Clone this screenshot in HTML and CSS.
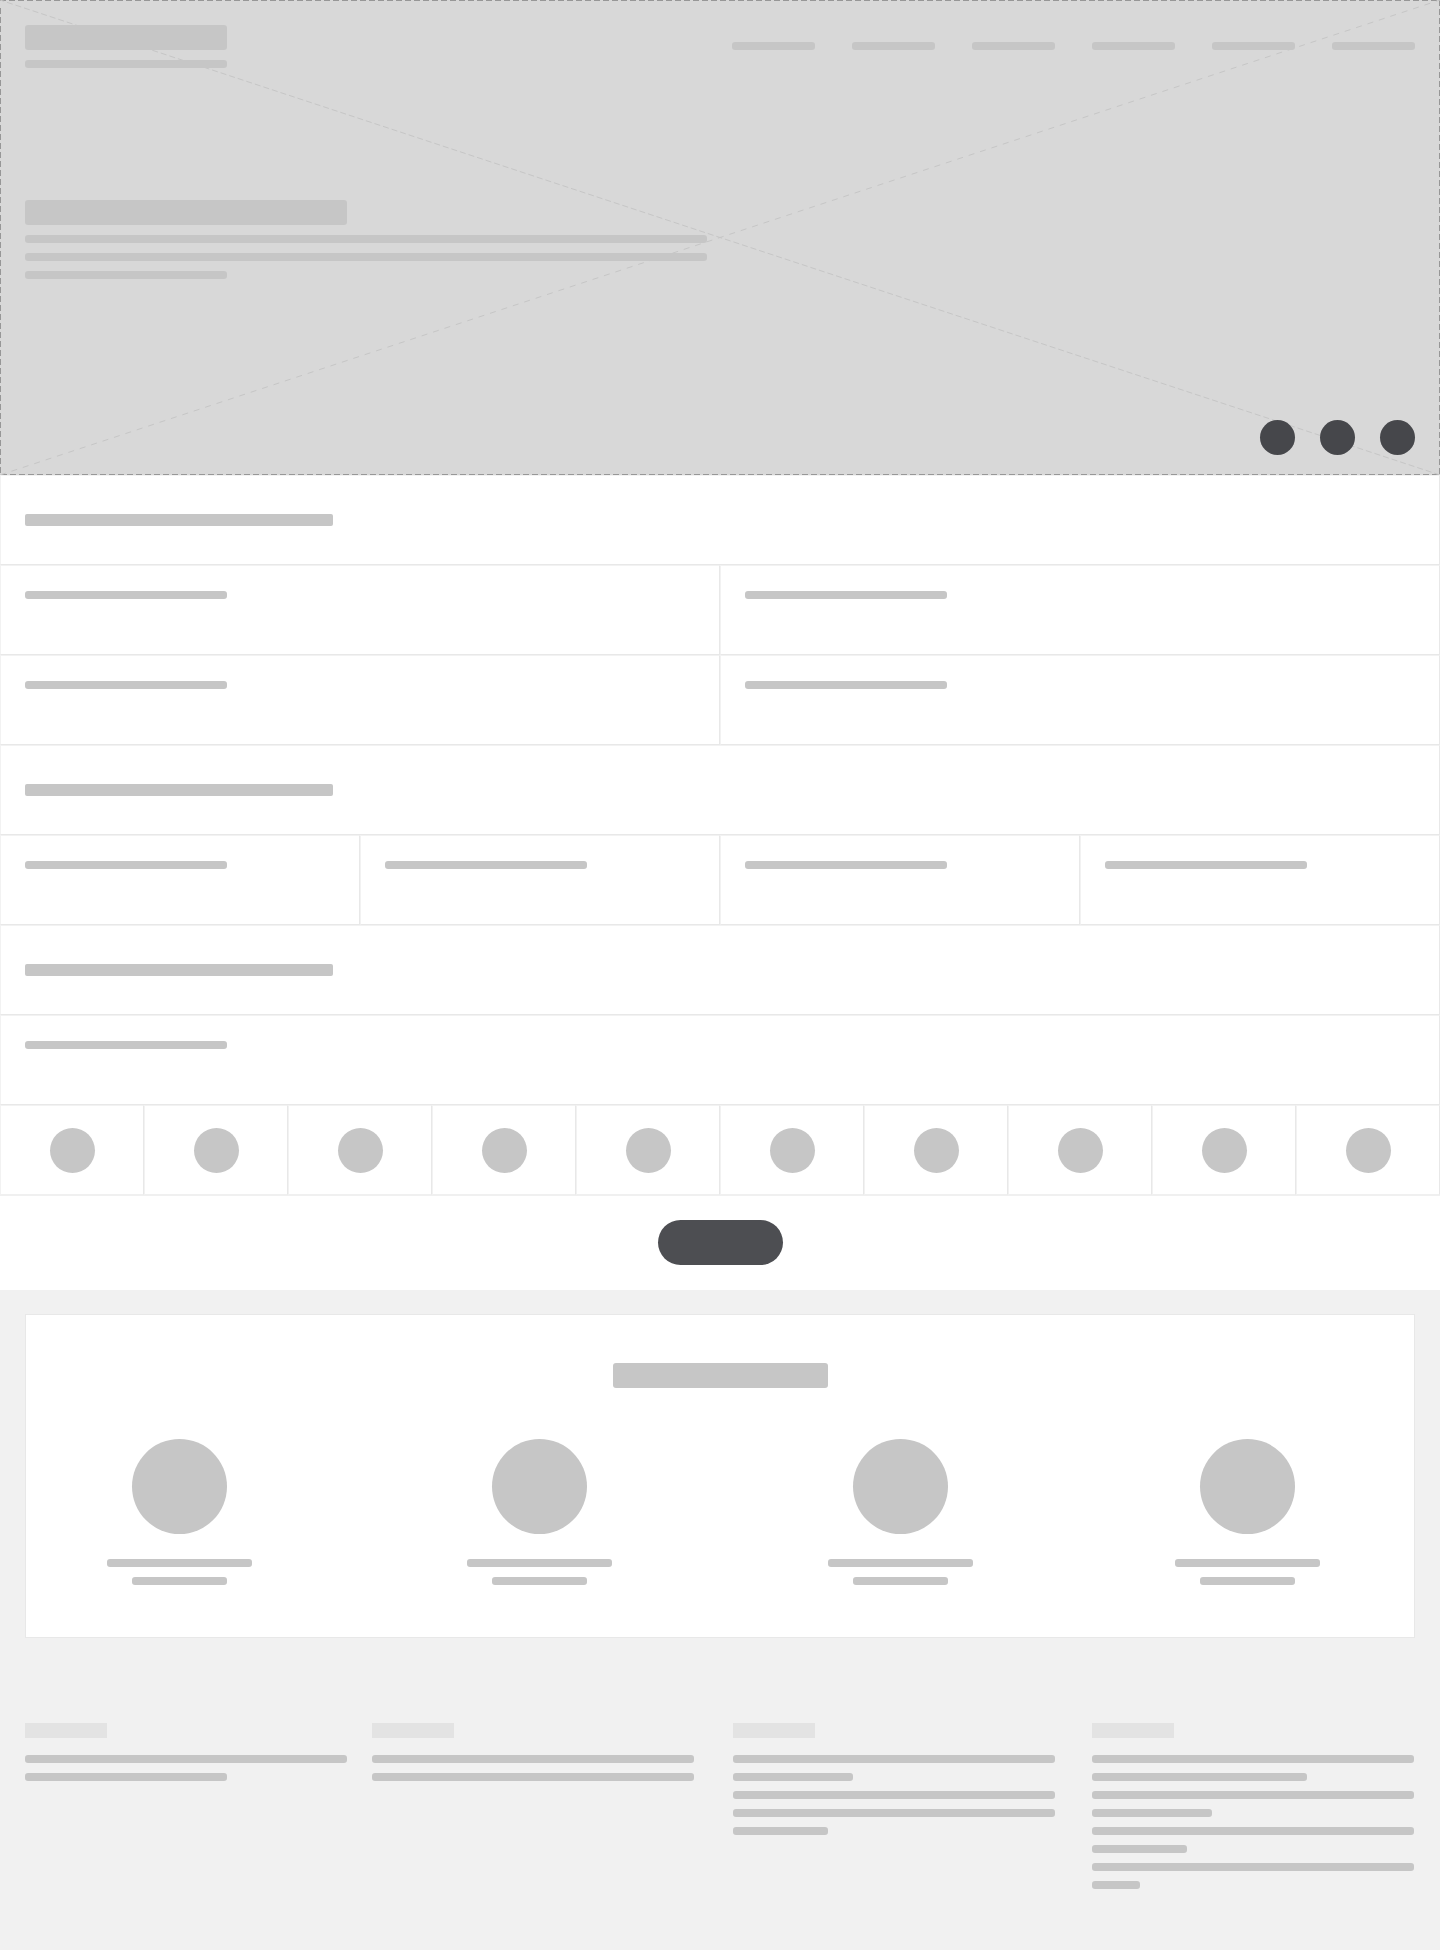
FILE: index.html
```html
<!DOCTYPE html>
<html lang="en">
<head>
<meta charset="utf-8">
<meta name="viewport" content="width=device-width, initial-scale=1">
<title>Wireframe</title>
<link rel="stylesheet" href="styles.css">
</head>
<body>
<header class="hero">
  <svg class="hero-frame" aria-hidden="true">
    <g class="edges">
      <line x1="0" y1="0.5" x2="100%" y2="0.5"/>
      <line x1="100%" y1="0" x2="100%" y2="100%" class="edge-thick"/>
      <line x1="1" y1="474.5" x2="100%" y2="474.5"/>
      <line x1="0.5" y1="8" x2="0.5" y2="100%"/>
    </g>
    <line class="diagonal" x1="100%" y1="100%" x2="0" y2="0"/>
    <line class="diagonal loose" x1="0" y1="100%" x2="100%" y2="0"/>
  </svg>
  <div class="topbar">
    <div class="stack">
      <span class="bar bar-lg w-202"></span>
      <span class="bar w-202"></span>
    </div>
    <nav class="nav" aria-label="Main">
      <a class="bar" href="#" aria-label="Link 1"></a>
      <a class="bar" href="#" aria-label="Link 2"></a>
      <a class="bar" href="#" aria-label="Link 3"></a>
      <a class="bar" href="#" aria-label="Link 4"></a>
      <a class="bar" href="#" aria-label="Link 5"></a>
      <a class="bar" href="#" aria-label="Link 6"></a>
    </nav>
  </div>
  <div class="stack intro">
    <span class="bar bar-lg w-322"></span>
    <span class="bar w-682"></span>
    <span class="bar w-682"></span>
    <span class="bar w-202"></span>
  </div>
  <div class="social">
    <a href="#" aria-label="Social 1"></a>
    <a href="#" aria-label="Social 2"></a>
    <a href="#" aria-label="Social 3"></a>
  </div>
</header>

<main>
  <section class="cells">
    <div class="cell cell-title"><span class="bar bar-md"></span></div>
    <div class="row cols-2">
      <div class="cell"><span class="bar w-202"></span></div>
      <div class="cell"><span class="bar w-202"></span></div>
      <div class="cell"><span class="bar w-202"></span></div>
      <div class="cell"><span class="bar w-202"></span></div>
    </div>
    <div class="cell cell-title"><span class="bar bar-md"></span></div>
    <div class="row cols-4">
      <div class="cell"><span class="bar w-202"></span></div>
      <div class="cell"><span class="bar w-202"></span></div>
      <div class="cell"><span class="bar w-202"></span></div>
      <div class="cell"><span class="bar w-202"></span></div>
    </div>
    <div class="cell cell-title"><span class="bar bar-md"></span></div>
    <div class="cell"><span class="bar w-202"></span></div>
    <div class="row cols-10">
      <div class="cell cell-dot"><span class="dot"></span></div>
      <div class="cell cell-dot"><span class="dot"></span></div>
      <div class="cell cell-dot"><span class="dot"></span></div>
      <div class="cell cell-dot"><span class="dot"></span></div>
      <div class="cell cell-dot"><span class="dot"></span></div>
      <div class="cell cell-dot"><span class="dot"></span></div>
      <div class="cell cell-dot"><span class="dot"></span></div>
      <div class="cell cell-dot"><span class="dot"></span></div>
      <div class="cell cell-dot"><span class="dot"></span></div>
      <div class="cell cell-dot"><span class="dot"></span></div>
    </div>
  </section>
  <div class="action"><button class="pill" type="button" aria-label="Continue"></button></div>

  <section class="card">
    <span class="bar bar-lg card-title"></span>
    <div class="people">
      <div class="person"><span class="avatar"></span><span class="bar w-145"></span><span class="bar w-95"></span></div>
      <div class="person"><span class="avatar"></span><span class="bar w-145"></span><span class="bar w-95"></span></div>
      <div class="person"><span class="avatar"></span><span class="bar w-145"></span><span class="bar w-95"></span></div>
      <div class="person"><span class="avatar"></span><span class="bar w-145"></span><span class="bar w-95"></span></div>
    </div>
  </section>
</main>

<footer class="footer">
  <div class="stack">
    <span class="label"></span>
    <span class="bar w-322"></span>
    <span class="bar w-202"></span>
  </div>
  <div class="stack">
    <span class="label"></span>
    <span class="bar w-322"></span>
    <span class="bar w-322"></span>
  </div>
  <div class="stack">
    <span class="label"></span>
    <span class="bar w-322"></span>
    <span class="bar w-120"></span>
    <span class="bar w-322"></span>
    <span class="bar w-322"></span>
    <span class="bar w-95"></span>
  </div>
  <div class="stack">
    <span class="label"></span>
    <span class="bar w-322"></span>
    <span class="bar w-215"></span>
    <span class="bar w-322"></span>
    <span class="bar w-120"></span>
    <span class="bar w-322"></span>
    <span class="bar w-95"></span>
    <span class="bar w-322"></span>
    <span class="bar w-48"></span>
  </div>
</footer>
</body>
</html>
```

FILE: styles.css
```css
*,
*::before,
*::after {
  box-sizing: border-box;
}

body {
  margin: 0;
  background: #f1f1f1;
  font-family: "Liberation Sans", Arial, sans-serif;
}

/* Placeholder bars */
.bar {
  display: block;
  height: 8px;
  max-width: 100%;
  border-radius: 3px;
  background: #c6c6c6;
}

.bar-md { width: 308px; height: 12px; border-radius: 2px; }
.bar-lg { height: 25px; }

.w-48 { width: 48px; }
.w-95 { width: 95px; }
.w-120 { width: 120px; }
.w-145 { width: 145px; }
.w-202 { width: 202px; }
.w-215 { width: 215px; }
.w-322 { width: 322px; }
.w-682 { width: 682px; }

.stack {
  display: flex;
  flex-direction: column;
  gap: 10px;
}

/* Hero */
.hero {
  position: relative;
  display: flex;
  flex-direction: column;
  height: 475px;
  padding: 25px 25px 20px;
  background: #d8d8d8;
}

.hero-frame {
  position: absolute;
  inset: 0;
  width: 100%;
  height: 100%;
  pointer-events: none;
}

.edges line {
  stroke: #979797;
  stroke-width: 1;
  stroke-dasharray: 6 3;
}

/* Half of this stroke falls outside the frame */
.edges .edge-thick { stroke-width: 2; }

.diagonal {
  stroke: #c6c6c6;
  stroke-width: 1;
  stroke-dasharray: 6 3;
}

.loose { stroke-dasharray: 6 6; }

.topbar {
  position: relative;
  display: flex;
  justify-content: space-between;
}

.nav {
  display: flex;
  gap: 37px;
  padding-top: 17px;
}

.nav .bar { width: 83px; }

.intro {
  position: relative;
  margin-top: 132px;
}

.social {
  position: relative;
  display: flex;
  justify-content: flex-end;
  gap: 25px;
  margin-top: auto;
}

.social a {
  width: 35px;
  height: 35px;
  border-radius: 50%;
  background: #46474b;
}

/* Bordered rows */
.cells { background: #fff; }

.row { display: grid; }
.cols-2 { grid-template-columns: repeat(2, 1fr); }
.cols-4 { grid-template-columns: repeat(4, 1fr); }
.cols-10 { grid-template-columns: repeat(10, 1fr); }

.cell {
  height: 90px;
  padding: 25px 24px;
  border: 1px solid #f2f2f2;
  border-right-color: #e8e8e8;
  border-bottom-color: #e8e8e8;
}

.cell-title { padding-top: 38px; }

.cell-dot {
  display: flex;
  justify-content: center;
  padding: 22px 0 0;
  border-bottom-color: #f0f0f0;
}

.dot {
  width: 45px;
  height: 45px;
  border-radius: 50%;
  background: #c6c6c6;
}

.action {
  display: flex;
  justify-content: center;
  padding: 24px 0 25px;
  border-top: 1px solid #f0f0f0;
  background: #fff;
}

.pill {
  width: 125px;
  height: 45px;
  padding: 0;
  border: 0;
  border-radius: 23px;
  background: #4d4e52;
}

/* Card */
.card {
  margin: 24px 25px 0;
  padding: 48px 0 52px;
  border: 1px solid #e8e8e8;
  background: #fff;
}

.card-title {
  width: 215px;
  margin: 0 auto 51px;
}

.people {
  display: grid;
  grid-template-columns: 360fr 361fr 347fr 239fr;
  padding-left: 81px;
}

.person {
  display: flex;
  flex-direction: column;
  align-items: center;
  gap: 10px;
  width: 145px;
}

.avatar {
  width: 95px;
  height: 95px;
  margin-bottom: 15px;
  border-radius: 50%;
  background: #c6c6c6;
}

/* Footer */
.footer {
  display: grid;
  grid-template-columns: 347fr 361fr 359fr 323fr;
  padding: 85px 25px 61px;
}

.label {
  width: 82px;
  height: 15px;
  margin-bottom: 7px;
  background: #e3e3e3;
}
```
